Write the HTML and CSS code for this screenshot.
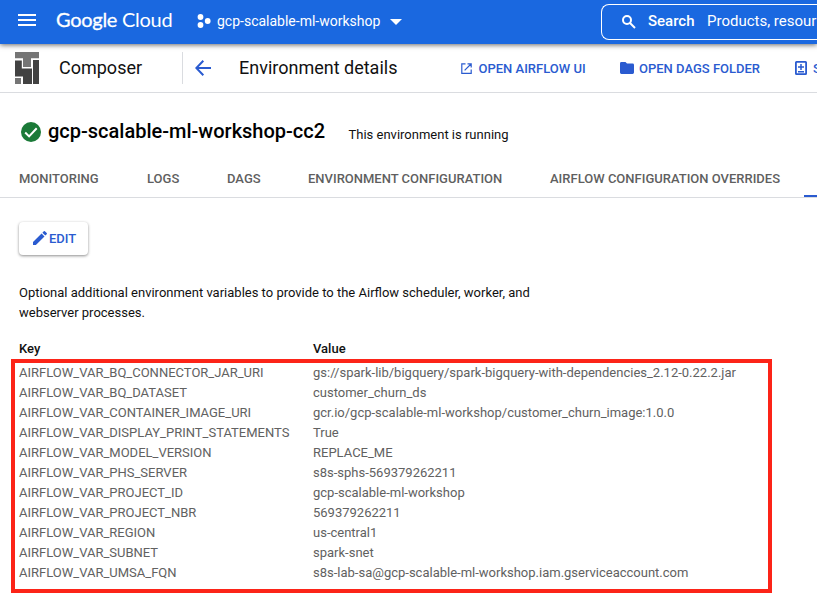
FILE: index.html
```html
<!DOCTYPE html>
<html lang="en">
<head>
<meta charset="utf-8">
<title>Environment details – Composer</title>
<link rel="stylesheet" href="styles.css">
</head>
<body>
<header class="topbar">
  <svg class="menu" viewBox="0 0 18 12" fill="#fff"><path d="M0 0h18v2H0zM0 5h18v2H0zM0 10h18v2H0z"/></svg>
  <div class="brand"><span class="brand-google">Google</span> <span class="brand-cloud">Cloud</span></div>
  <svg class="project-icon" viewBox="0 0 14 14" fill="#fff"><circle cx="3.5" cy="3" r="2.9"/><circle cx="3.5" cy="11" r="2.9"/><circle cx="10.7" cy="7" r="2.9"/></svg>
  <span class="project">gcp-scalable-ml-workshop</span>
  <svg class="caret" viewBox="0 0 12 6" fill="#fff"><path d="M0 0h12L6 6z"/></svg>
  <div class="search">
    <svg class="search-icon" viewBox="0 0 14 14" fill="none" stroke="#fff" stroke-width="2"><circle cx="5" cy="5" r="4"/><path d="M8 8l5 5"/></svg>
    <span class="search-label">Search</span>
    <span class="search-hint">Products, resour</span>
  </div>
</header>
<div class="toolbar">
  <svg class="product-icon" viewBox="0 0 24 32"><path fill="#757575" d="M0 0h24v6.300h-8V15H8V6.300H0zM0 26h6v6H0z"/><path fill="#424242" d="M0 8.500h6.800v8H17V32H8v-7.500H0zM18 8h6v24h-6z"/></svg>
  <span class="product">Composer</span>
  <div class="page-head">
    <svg class="back" viewBox="0 0 16 16" fill="none" stroke="#2a5bd0" stroke-width="2"><path d="M16 8H1.500M8.300.8L1.300 8l7 7.200"/></svg>
    <span class="page-title">Environment details</span>
  </div>
  <a class="action action-airflow"><svg width="11" height="11" viewBox="0 0 11 11" fill="none" stroke="#2a5bd0" stroke-width="1.200"><path d="M4.500.9H.8v9.400h9.400V6.500M6.500.8h3.700v3.700M10 1L3.600 7.400"/></svg><span>OPEN AIRFLOW UI</span></a>
  <a class="action action-folder"><svg width="14" height="12" viewBox="0 0 14 12" fill="#2a5bd0"><path d="M1.400 0H5.500L7 1.600h5.700A1.300 1.300 0 0 1 14 2.900v7.700A1.400 1.400 0 0 1 12.600 12H1.400A1.400 1.400 0 0 1 0 10.600V1.400A1.400 1.400 0 0 1 1.400 0z"/></svg><span>OPEN DAGS FOLDER</span></a>
  <a class="action action-snapshot"><svg width="12" height="14" viewBox="0 0 12 14" fill="none" stroke="#2a5bd0" stroke-width="1.800"><rect x=".9" y=".9" width="10.200" height="12.200" rx=".6"/><path d="M6 3v6M3 6h6M3 10.700h6" stroke-width="1.500"/></svg><span>S</span></a>
</div>
<main>
  <div class="env">
    <svg class="ok" viewBox="0 0 20 20"><circle cx="10" cy="10" r="10" fill="#1b7a38"/><path d="M4.200 10.500l3.900 3.900 7.600-8.100" fill="none" stroke="#fff" stroke-width="2"/></svg>
    <h1>gcp-scalable-ml-workshop-cc2</h1>
    <span class="state">This environment is running</span>
  </div>
  <nav class="tabs">
    <a class="t1">MONITORING</a><a class="t2">LOGS</a><a class="t3">DAGS</a><a class="t4">ENVIRONMENT CONFIGURATION</a><a class="t5">AIRFLOW CONFIGURATION OVERRIDES</a><a class="active"></a>
  </nav>
  <section class="content">
    <button class="edit"><svg width="14" height="14" viewBox="0 0 14 14" fill="#2a5bd0"><path d="M0 11.100V14h2.900L11.500 5.400 8.600 2.500zM13.700 3.200a.8.800 0 0 0 0-1.100L11.900.3a.8.800 0 0 0-1.100 0L9.400 1.700l2.900 2.900z"/></svg>EDIT</button>
    <p class="intro">Optional additional environment variables to provide to the Airflow scheduler, worker, and<br>webserver processes.</p>
    <div class="row head"><span>Key</span><span>Value</span></div>
    <div class="vars">
      <div class="row"><span>AIRFLOW_VAR_BQ_CONNECTOR_JAR_URI</span><span>gs://spark-lib/bigquery/spark-bigquery-with-dependencies_2.12-0.22.2.jar</span></div>
      <div class="row"><span>AIRFLOW_VAR_BQ_DATASET</span><span>customer_churn_ds</span></div>
      <div class="row"><span>AIRFLOW_VAR_CONTAINER_IMAGE_URI</span><span>gcr.io/gcp-scalable-ml-workshop/customer_churn_image:1.0.0</span></div>
      <div class="row"><span>AIRFLOW_VAR_DISPLAY_PRINT_STATEMENTS</span><span>True</span></div>
      <div class="row"><span>AIRFLOW_VAR_MODEL_VERSION</span><span>REPLACE_ME</span></div>
      <div class="row"><span>AIRFLOW_VAR_PHS_SERVER</span><span>s8s-sphs-569379262211</span></div>
      <div class="row"><span>AIRFLOW_VAR_PROJECT_ID</span><span>gcp-scalable-ml-workshop</span></div>
      <div class="row"><span>AIRFLOW_VAR_PROJECT_NBR</span><span>569379262211</span></div>
      <div class="row"><span>AIRFLOW_VAR_REGION</span><span>us-central1</span></div>
      <div class="row"><span>AIRFLOW_VAR_SUBNET</span><span>spark-snet</span></div>
      <div class="row"><span>AIRFLOW_VAR_UMSA_FQN</span><span>s8s-lab-sa@gcp-scalable-ml-workshop.iam.gserviceaccount.com</span></div>
    </div>
  </section>
</main>
</body>
</html>
```
FILE: styles.css
```css
* { box-sizing: border-box; }
html, body { overflow: hidden; }
body { margin: 0; height: 609px; background: #fff; color: #111; font: 13px/20px Roboto, "Liberation Sans", sans-serif; }
svg { display: block; flex: none; }
span, a { white-space: nowrap; }

.topbar { position: relative; display: flex; align-items: center; height: 44px; padding: 0 0 4px 18px; background: #1a68e0; color: #fff; box-shadow: 0 1px 5px rgba(0,0,0,.6); }
.topbar > *, .toolbar > * { flex: none; }
.menu { width: 18px; height: 12px; }
.brand { width: 142px; margin-top: -2px; padding-left: 20px; font: 20px/24px Lato, sans-serif; letter-spacing: -.28px; white-space: nowrap; }
.project-icon { width: 14px; height: 14px; margin: 2px 6px 0 19px; }
.project { width: 164px; margin-top: 1px; font-size: 14px; }
.caret { width: 12px; height: 6px; margin: 4px 0 0 9px; }
.brand-google { -webkit-text-stroke: .3px #fff; }
.search { display: flex; align-items: center; width: 216px; height: 36px; margin: 4px 0 0 199px; padding-left: 20px; border: 1px solid #fff; border-right: 0; border-radius: 8px 0 0 8px; font-size: 15px; overflow: hidden; }
.search-icon { width: 14px; height: 14px; }
.search span { flex: none; margin-top: -3px; }
.search .search-label { width: 59px; margin-left: 12px; font-weight: 500; }

.toolbar { display: flex; align-items: center; height: 49px; padding-left: 15px; border-bottom: 1px solid #dadce0; overflow: hidden; }
.product-icon { width: 24px; height: 32px; }
.product { width: 123px; margin-left: 20px; font-size: 18px; }
.page-head { display: flex; align-items: center; width: 278px; height: 32px; padding-left: 12px; border-left: 1px solid #dadce0; }
.back { width: 16px; height: 16px; }
.page-title { margin-left: 28px; font-size: 18px; }
.action { display: flex; align-items: center; color: #2a5bd0; font-weight: 500; }
.action span { margin-top: 1px; }
.action-airflow { width: 160px; gap: 6.500px; padding-left: 1px; }
.action-folder { width: 175px; gap: 5px; }
.action-snapshot { gap: 6px; }

.env { display: flex; align-items: center; height: 66px; padding: 11px 0 0 21px; }
.ok { width: 20px; height: 20px; }
h1 { width: 300px; margin: -2px 0 0; padding-left: 7px; font-size: 20px; font-weight: 500; line-height: 24px; white-space: nowrap; color: #000; }
.state { margin: 6px 0 0 7.500px; }

.tabs { display: flex; height: 39px; padding-left: 19px; border-bottom: 1px solid #dadce0; color: #5f5f5f; font-weight: 500; overflow: hidden; }
.tabs a { flex: none; padding-top: 10px; }
.t1 { width: 128px; }
.t2 { width: 80px; }
.t3 { width: 81px; }
.t4 { width: 242px; }
.t5 { width: 254px; }
.tabs .active { flex: 1; height: 38px; border-bottom: 2px solid #2a5bd0; }

.content { padding: 24px 11px 0; }
.edit { display: flex; align-items: center; gap: 2px; width: 69px; height: 33px; margin: 0 0 0 8px; padding: 0 0 0 14px; border: 0; border-radius: 4px; background: #fff; color: #2a5bd0; font: 500 13px/20px Roboto, sans-serif; box-shadow: 0 1px 3px rgba(0,0,0,.45); }
.edit svg { margin-top: -2px; }
.intro { margin: 28px 0 0 8px; }
.row { display: grid; grid-template-columns: 294px 1fr; }
.head { margin: 16px 0 0 8px; color: #111; font-weight: 500; }
.vars { width: 761px; height: 234px; padding: 0 0 0 4px; border: 4px solid #fc2418; color: #616161; }
```
